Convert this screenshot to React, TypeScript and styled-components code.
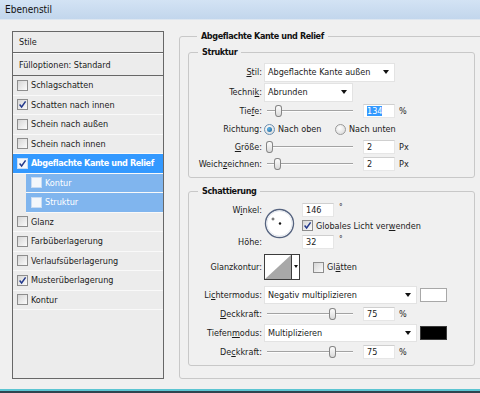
import React from 'react'
import styled, { createGlobalStyle } from 'styled-components'

const FONT = `'DejaVu Sans Condensed', 'DejaVu Sans', 'Liberation Sans', sans-serif`

const GlobalStyle = createGlobalStyle`
  body {
    margin: 0;
    background: #f0f0f0;
  }
`

const Window = styled.div`
  width: 480px;
  height: 393px;
  display: flex;
  flex-direction: column;
  overflow: hidden;
  background: #f0f0f0;
  font-family: ${FONT};
  font-size: 9px;
  color: #1b1b1b;

  u {
    text-decoration: underline;
  }
`

const TitleBar = styled.div`
  flex: none;
  height: 20px;
  box-sizing: border-box;
  display: flex;
  align-items: center;
  padding-left: 5px;
  background: linear-gradient(#d3e3f4, #c2d6ec);
  border-bottom: 1px solid #dde6f0;
  font-size: 10px;
  color: #111;
`

const Body = styled.div`
  flex: 1;
  min-height: 0;
  display: flex;
  align-items: flex-start;
  gap: 15px;
  padding: 11px 0 0 12px;
`

const BottomFrame = styled.div`
  flex: none;
  height: 4px;
  box-sizing: border-box;
  border-top: 2px solid #5cc5d2;
  background: #2f4450;
`

/* left: list of layer styles */

const StyleList = styled.div`
  flex: none;
  width: 152px;
  height: 348px;
  box-sizing: border-box;
  border: 1px solid #676767;
  background: #ececec;
  display: flex;
  flex-direction: column;
`

const ListHeader = styled.div<{ $gap?: boolean }>`
  height: ${({ $gap }) => ($gap ? 23 : 21)}px;
  box-sizing: border-box;
  display: flex;
  align-items: center;
  padding-left: 6px;
  border-top: ${({ $gap }) => ($gap ? '1px solid #fafafa' : 'none')};
  border-bottom: 1px solid #676767;
`

const Item = styled.div<{ $selected?: boolean; $sub?: boolean }>`
  height: 19.5px;
  box-sizing: border-box;
  display: flex;
  align-items: center;
  gap: 3px;
  margin-left: ${({ $sub }) => ($sub ? 13 : 0)}px;
  padding-left: ${({ $sub }) => ($sub ? 5 : 4)}px;
  border-bottom: 1px solid #f9f9f9;
  background: ${({ $selected, $sub }) =>
    $selected ? '#3399ff' : $sub ? '#80b5ee' : 'transparent'};
  color: ${({ $selected, $sub }) => ($selected || $sub ? '#fff' : '#1b1b1b')};
  font-weight: ${({ $selected }) => ($selected ? 'bold' : 'normal')};
  letter-spacing: ${({ $selected }) => ($selected ? '-0.4px' : 'normal')};
  white-space: nowrap;
`

const Box = styled.span<{ $light?: boolean }>`
  flex: none;
  width: 11px;
  height: 11px;
  box-sizing: border-box;
  border: 1px solid ${({ $light }) => ($light ? '#c9dcf3' : '#8d8d8d')};
  background: ${({ $light }) =>
    $light ? '#f4f7fb' : 'linear-gradient(135deg, #d6d6d6, #fbfbfb)'};
  display: flex;
  align-items: center;
  justify-content: center;
`

const Check = ({ on, light }: { on?: boolean; light?: boolean }) => (
  <Box $light={light}>
    {on && (
      <svg width="9" height="9" viewBox="0 0 9 9">
        <path
          d="M1.6 4.6 L3.6 7 L7.6 1.4"
          fill="none"
          stroke="#23398c"
          strokeWidth="1.5"
        />
      </svg>
    )}
  </Box>
)

/* right: settings */

const Settings = styled.div`
  flex: none;
  margin-top: 5px;
  width: 304px;
  height: 343px;
  box-sizing: border-box;
  border: 1px solid #c8c8c8;
  border-radius: 3px;
  padding: 0 7px 0 8px;
  display: flex;
  flex-direction: column;
`

const Group = styled.div<{ $mt: number; $pb: number }>`
  margin-top: ${({ $mt }) => $mt}px;
  border: 1px solid #c8c8c8;
  border-radius: 3px;
  padding-bottom: ${({ $pb }) => $pb}px;
  display: flex;
  flex-direction: column;
`

const GroupTitle = styled.div`
  align-self: flex-start;
  margin: -7px 0 0 9px;
  padding: 0 4px;
  line-height: 13px;
  background: #f0f0f0;
  font-weight: bold;
  letter-spacing: -0.4px;
  color: #111;
`

const FieldRow = styled.div<{ $h: number; $mt?: number }>`
  height: ${({ $h }) => $h}px;
  margin-top: ${({ $mt }) => $mt ?? 0}px;
  display: grid;
  grid-template-columns: 73px 1fr;
  column-gap: 2px;
  align-items: center;
`

const Label = styled.span<{ $row?: number }>`
  grid-column: 1;
  grid-row: ${({ $row }) => $row ?? 'auto'};
  text-align: right;
  white-space: nowrap;
`

const Controls = styled.div<{ $col?: number; $row?: number }>`
  grid-column: ${({ $col }) => $col ?? 'auto'};
  grid-row: ${({ $row }) => $row ?? 'auto'};
  display: flex;
  align-items: center;
  white-space: nowrap;
`

const SelectBox = styled.div<{ $width: number; $height?: number }>`
  width: ${({ $width }) => $width}px;
  height: ${({ $height }) => $height ?? 19}px;
  box-sizing: border-box;
  display: flex;
  align-items: center;
  justify-content: space-between;
  padding: 0 5px 0 3px;
  background: #fff;
  border: 1px solid #e3e3e3;
`

const Arrow = styled.span<{ $small?: boolean }>`
  width: 0;
  height: 0;
  border-left: ${({ $small }) => ($small ? 2.5 : 3.5)}px solid transparent;
  border-right: ${({ $small }) => ($small ? 2.5 : 3.5)}px solid transparent;
  border-top: ${({ $small }) => ($small ? 3 : 4)}px solid #111;
`

const Select = ({
  value,
  width,
  height,
}: {
  value: string
  width: number
  height?: number
}) => (
  <SelectBox $width={width} $height={height}>
    <span>{value}</span>
    <Arrow />
  </SelectBox>
)

const Track = styled.div`
  position: relative;
  flex: none;
  width: 92px;
  height: 14px;

  &::before {
    content: '';
    position: absolute;
    left: 3px;
    right: 3px;
    top: 6px;
    height: 1px;
    background: #a3a3a3;
    border-bottom: 1px solid #fcfcfc;
  }
`

const Thumb = styled.span`
  position: absolute;
  top: 1px;
  width: 7px;
  height: 12px;
  margin-left: -3.5px;
  box-sizing: border-box;
  border: 1px solid #858585;
  border-radius: 3px 3px 3px 3px / 3px 3px 4px 4px;
  background: linear-gradient(#fdfdfd, #dadada);
`

const Slider = ({ at }: { at: number }) => (
  <Track>
    <Thumb style={{ left: at }} />
  </Track>
)

const Field = styled.div<{ $ml: number }>`
  width: 32px;
  height: 14px;
  margin-left: ${({ $ml }) => $ml}px;
  box-sizing: border-box;
  display: flex;
  align-items: center;
  padding-left: 3px;
  background: #fff;
  border: 1px solid #e6e6e6;
  border-top-color: #cfcfcf;
`

const Highlight = styled.span`
  background: #3399ff;
  color: #fff;
`

const Unit = styled.span`
  margin-left: 4px;
`

const Degree = styled.span`
  margin-left: 5px;
  align-self: flex-start;
  font-size: 8px;
`

const RadioGroup = styled.div`
  display: grid;
  grid-template-columns: 71px auto;
  align-items: center;
`

const RadioOption = styled.span`
  display: flex;
  align-items: center;
  gap: 3px;
`

const RadioDot = styled.span<{ $on?: boolean }>`
  flex: none;
  width: 11px;
  height: 11px;
  box-sizing: border-box;
  border-radius: 50%;
  border: 1px solid ${({ $on }) => ($on ? '#6a8fb0' : '#9a9a9a')};
  background: radial-gradient(circle at 40% 35%, #ffffff, #d4d4d4);
  display: flex;
  align-items: center;
  justify-content: center;

  &::after {
    content: '';
    display: ${({ $on }) => ($on ? 'block' : 'none')};
    width: 5px;
    height: 5px;
    border-radius: 50%;
    background: radial-gradient(circle at 35% 35%, #5fb3e6, #1a5f94);
  }
`

const CheckOption = styled.span<{ $ml?: number }>`
  display: flex;
  align-items: center;
  gap: 3px;
  margin-left: ${({ $ml }) => $ml ?? 0}px;
`

const AngleGrid = styled.div`
  margin-top: 4px;
  display: grid;
  grid-template-columns: 73px 36px 1fr;
  grid-template-rows: 15px 17px 15px;
  column-gap: 2px;
  align-items: center;
`

const DialCell = styled.div`
  grid-column: 2;
  grid-row: 1 / span 3;
  align-self: start;
  margin-top: 6px;
  display: flex;
`

const ContourBox = styled.div`
  display: flex;
  width: 36px;
  height: 26px;
  box-sizing: border-box;
  border: 1px solid #3c3c3c;
  background: #fff;
`

const ContourDrop = styled.div`
  flex: 1;
  border-left: 1px solid #3c3c3c;
  display: flex;
  align-items: center;
  justify-content: center;
  padding-bottom: 2px;
`

const Swatch = styled.span<{ $color: string }>`
  width: 27px;
  height: 14px;
  margin-left: 3px;
  box-sizing: border-box;
  background: ${({ $color }) => $color};
  border: 1px solid ${({ $color }) => ($color === '#000' ? '#3a3a3a' : '#a8a8a8')};
`

const styles = [
  { name: 'Schlagschatten' },
  { name: 'Schatten nach innen', on: true },
  { name: 'Schein nach außen' },
  { name: 'Schein nach innen' },
  { name: 'Abgeflachte Kante und Relief', on: true, selected: true },
  { name: 'Kontur', sub: true },
  { name: 'Struktur', sub: true },
  { name: 'Glanz' },
  { name: 'Farbüberlagerung' },
  { name: 'Verlaufsüberlagerung' },
  { name: 'Musterüberlagerung', on: true },
  { name: 'Kontur' },
]

const App = () => (
  <>
    <GlobalStyle />
    <Window>
      <TitleBar>Ebenenstil</TitleBar>
      <Body>
        <StyleList>
          <ListHeader>Stile</ListHeader>
          <ListHeader $gap>Fülloptionen: Standard</ListHeader>
          {styles.map((s, i) => (
            <Item key={i} $selected={s.selected} $sub={s.sub}>
              <Check on={s.on} light={s.selected || s.sub} />
              {s.name}
            </Item>
          ))}
        </StyleList>

        <Settings>
          <GroupTitle>Abgeflachte Kante und Relief</GroupTitle>

          <Group $mt={9} $pb={5}>
            <GroupTitle>Struktur</GroupTitle>
            <FieldRow $h={20} $mt={3}>
              <Label>
                <u>S</u>til:
              </Label>
              <Controls>
                <Select value="Abgeflachte Kante außen" width={131} />
              </Controls>
            </FieldRow>
            <FieldRow $h={20}>
              <Label>
                Techni<u>k</u>:
              </Label>
              <Controls>
                <Select value="Abrunden" width={89} />
              </Controls>
            </FieldRow>
            <FieldRow $h={18}>
              <Label>
                Tie<u>f</u>e:
              </Label>
              <Controls>
                <Slider at={14} />
                <Field $ml={7}>
                  <Highlight>134</Highlight>
                </Field>
                <Unit>%</Unit>
              </Controls>
            </FieldRow>
            <FieldRow $h={18}>
              <Label>Richtung:</Label>
              <RadioGroup>
                <RadioOption>
                  <RadioDot $on />
                  <span>Nach oben</span>
                </RadioOption>
                <RadioOption>
                  <RadioDot />
                  <span>Nach unten</span>
                </RadioOption>
              </RadioGroup>
            </FieldRow>
            <FieldRow $h={17}>
              <Label>
                <u>G</u>röße:
              </Label>
              <Controls>
                <Slider at={5} />
                <Field $ml={7}>2</Field>
                <Unit>Px</Unit>
              </Controls>
            </FieldRow>
            <FieldRow $h={17}>
              <Label>
                Weich<u>z</u>eichnen:
              </Label>
              <Controls>
                <Slider at={13} />
                <Field $ml={7}>2</Field>
                <Unit>Px</Unit>
              </Controls>
            </FieldRow>
          </Group>

          <Group $mt={13} $pb={4}>
            <GroupTitle>Schattierung</GroupTitle>
            <AngleGrid>
              <Label $row={1}>
                W<u>i</u>nkel:
              </Label>
              <DialCell>
                <svg width="31" height="31" viewBox="0 0 31 31">
                  <circle cx="15.5" cy="15.5" r="14" fill="#fff" stroke="#55637f" strokeWidth="1.4" />
                  <circle cx="15.5" cy="15.5" r="12.6" fill="none" stroke="#e3e7ee" />
                  <circle cx="16" cy="15.5" r="1.2" fill="#111" />
                  <path d="M7.5 11h3M9 9.5v3" stroke="#333" strokeWidth="0.8" />
                </svg>
              </DialCell>
              <Controls $col={3} $row={1}>
                <Field $ml={0}>146</Field>
                <Degree>°</Degree>
              </Controls>
              <Controls $col={3} $row={2}>
                <CheckOption>
                  <Check on />
                  <span>
                    Globales Licht ver<u>w</u>enden
                  </span>
                </CheckOption>
              </Controls>
              <Label $row={3}>Höhe:</Label>
              <Controls $col={3} $row={3}>
                <Field $ml={0}>32</Field>
                <Degree>°</Degree>
              </Controls>
            </AngleGrid>

            <FieldRow $h={26} $mt={5}>
              <Label>Glanzkontur:</Label>
              <Controls>
                <ContourBox>
                  <svg width="26" height="24" viewBox="0 0 26 24">
                    <polygon points="0,24 26,0 26,24" fill="#a8a8a8" />
                  </svg>
                  <ContourDrop>
                    <Arrow $small />
                  </ContourDrop>
                </ContourBox>
                <CheckOption $ml={13}>
                  <Check />
                  <span>
                    Gl<u>ä</u>tten
                  </span>
                </CheckOption>
              </Controls>
            </FieldRow>
            <FieldRow $h={19} $mt={5}>
              <Label>
                Li<u>c</u>htermodus:
              </Label>
              <Controls>
                <Select value="Negativ multiplizieren" width={153} height={18} />
                <Swatch $color="#fff" />
              </Controls>
            </FieldRow>
            <FieldRow $h={19}>
              <Label>
                <u>D</u>eckkraft:
              </Label>
              <Controls>
                <Slider at={68} />
                <Field $ml={7}>75</Field>
                <Unit>%</Unit>
              </Controls>
            </FieldRow>
            <FieldRow $h={20}>
              <Label>
                Tiefen<u>m</u>odus:
              </Label>
              <Controls>
                <Select value="Multiplizieren" width={153} height={18} />
                <Swatch $color="#000" />
              </Controls>
            </FieldRow>
            <FieldRow $h={18}>
              <Label>
                De<u>c</u>kkraft:
              </Label>
              <Controls>
                <Slider at={68} />
                <Field $ml={7}>75</Field>
                <Unit>%</Unit>
              </Controls>
            </FieldRow>
          </Group>
        </Settings>
      </Body>
      <BottomFrame />
    </Window>
  </>
)

export default App
